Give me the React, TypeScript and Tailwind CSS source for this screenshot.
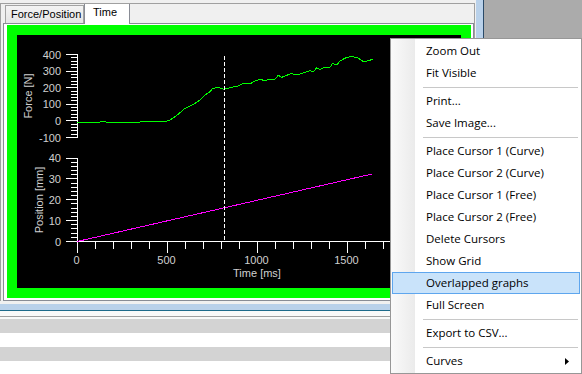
import React from "react";

// force curve, already in page pixels (x, y)
const forcePts: [number, number][] = [
  [77, 122], [100, 122], [103, 121.5], [106, 122], [120, 122], [123, 122.7], [126, 122],
  [140, 122], [145, 121.5], [150, 122], [165, 121.7], [170, 120], [175, 116.7], [180, 112.7],
  [185, 108.3], [190, 106], [195, 103.3], [200, 100], [205, 95], [210, 91.7], [212.7, 88.3],
  [218.3, 87.7], [221.7, 88.3], [224, 89.3], [230, 87.7], [238.3, 86], [243.3, 83.3], [250, 84],
  [253.3, 81.7], [260, 79.3], [265, 80.7], [268.3, 79.3], [275, 79.3], [278.3, 75.3], [281.7, 77.3],
  [286.7, 75.3], [291.7, 73.3], [295, 74.7], [300, 74], [305, 72.3], [310, 70.7], [313.3, 71.7],
  [316.7, 67.7], [320, 69.3], [325, 67.3], [330, 67.3], [332.7, 63.3], [336.7, 65], [340, 61],
  [346.7, 57.3], [351.7, 56.7], [356.7, 57.3], [360, 59.3], [363.3, 61.7], [368.3, 60.7], [372.7, 59.3],
];

const menuItems: (string | null)[] = [
  "Zoom Out",
  "Fit Visible",
  null,
  "Print...",
  "Save Image...",
  null,
  "Place Cursor 1 (Curve)",
  "Place Cursor 2 (Curve)",
  "Place Cursor 1 (Free)",
  "Place Cursor 2 (Free)",
  "Delete Cursors",
  "Show Grid",
  "Overlapped graphs",
  "Full Screen",
  null,
  "Export to CSV...",
  null,
  "Curves",
];

const FONT = "Liberation Sans, Arial, sans-serif";

const yF = (v: number) => 137.5 - (v + 100) * 0.166;
const yP = (v: number) => 241.5 - v * 2.0875;
const xT = (t: number) => 77.5 + t * 0.18;
const snap = (n: number) => Math.floor(n) + 0.5;

// axis labels: [text, x, y, anchor]
const labels: [string, number, number, "start" | "middle" | "end"][] = [
  ...[400, 300, 200, 100, 0, -100].map(
    (v) => [String(v), 61, yF(v) + 4, "end"] as [string, number, number, "end"]
  ),
  ...[40, 30, 20, 10, 0].map(
    (v) => [String(v), 61, yP(v) + 4, "end"] as [string, number, number, "end"]
  ),
  ...[0, 500, 1000, 1500].map(
    (t) => [String(t), xT(t) - 1, 264, "middle"] as [string, number, number, "middle"]
  ),
  ["Time [ms]", 257, 277, "middle"],
];

function Chart() {
  const forceTicks: number[] = [];
  for (let v = -100; v <= 400; v += 20) forceTicks.push(v);
  const posTicks: number[] = [];
  for (let v = 0; v <= 40; v += 2) posTicks.push(v);
  const timeTicks: number[] = [];
  for (let t = 0; t <= 2000; t += 100) timeTicks.push(t);

  return (
    <svg width="444" height="253" viewBox="17 35 444 253" className="block">
      <g stroke="#ffffff" strokeWidth="1" shapeRendering="crispEdges">
        {/* force axis */}
        <line x1="77.5" y1="54" x2="77.5" y2="138" />
        {forceTicks.map((v) => (
          <line key={`f${v}`} x1={v % 100 === 0 ? 66 : 71} y1={snap(yF(v))} x2="77" y2={snap(yF(v))} />
        ))}
        {/* position axis */}
        <line x1="77.5" y1="158" x2="77.5" y2="242" />
        {posTicks.map((v) => (
          <line key={`p${v}`} x1={v % 10 === 0 ? 66 : 71} y1={snap(yP(v))} x2="77" y2={snap(yP(v))} />
        ))}
        {/* time axis */}
        <line x1="77" y1="241.5" x2="446" y2="241.5" />
        {timeTicks.map((t) => (
          <line key={`t${t}`} x1={snap(xT(t))} y1="242" x2={snap(xT(t))} y2={t % 500 === 0 ? 253 : 249} />
        ))}
      </g>

      <g fill="#d0d0d0" fontFamily={FONT} fontSize="11">
        {labels.map(([s, x, y, a], i) => (
          <text key={i} x={x} y={y} textAnchor={a}>
            {s}
          </text>
        ))}
        <text transform="translate(32 96) rotate(-90)" textAnchor="middle">
          Force [N]
        </text>
        <text transform="translate(43 200) rotate(-90)" textAnchor="middle">
          Position [mm]
        </text>
      </g>

      <polyline
        points={forcePts.map((p) => p.join(",")).join(" ")}
        fill="none"
        stroke="#00ff00"
        strokeWidth="1"
        shapeRendering="crispEdges"
      />
      <line x1="77" y1="241.5" x2="372" y2="174" stroke="#ff00ff" strokeWidth="1" shapeRendering="crispEdges" />

      {/* cursor */}
      <line
        x1="224.5"
        y1="56"
        x2="224.5"
        y2="241"
        stroke="#ffffff"
        strokeWidth="1"
        strokeDasharray="4 2"
        shapeRendering="crispEdges"
      />
    </svg>
  );
}

function ContextMenu() {
  return (
    <div className="absolute left-[390px] top-[38px] w-[192px] h-[336px] border border-[#979797] bg-[linear-gradient(90deg,#fafafa_0px,#ebebeb_24px,#ffffff_24px)] py-[1px] font-['Open_Sans',sans-serif] text-[11.5px] text-black">
      {menuItems.map((item, i) =>
        item === null ? (
          <div key={i} className="h-[6px] flex items-center pl-[32px] pr-[3px]">
            <div className="h-px w-full bg-[#c8c8c8]" />
          </div>
        ) : (
          <div
            key={i}
            className={`h-[22px] mx-[1px] flex items-center justify-between pl-[33px] pr-[10px] border ${
              item === "Overlapped graphs" ? "bg-[#c9e3fa] border-[#5ea6ee]" : "border-transparent"
            }`}
          >
            <span>{item}</span>
            {item === "Curves" && (
              <svg width="4" height="7" viewBox="0 0 4 7">
                <path d="M0 0 L4 3.5 L0 7 Z" fill="#000" />
              </svg>
            )}
          </div>
        )
      )}
    </div>
  );
}

export default function App() {
  return (
    <div className="relative w-[582px] h-[374px] overflow-hidden bg-[#ababab] flex font-['Liberation_Sans',Arial,sans-serif]">
      <div className="w-[476px] h-full flex flex-col bg-[#f0f0f0]">
        {/* tab control */}
        <div className="mt-[3px] w-[475px] h-[298px] border-t border-l border-r border-[#a0a0a0] pl-[2px] flex flex-col">
          <div className="h-[19px] flex items-start">
            <div className="ml-[2px] mt-[1px] w-[79px] h-[18px] border-t border-l border-r border-[#a3a3a3] bg-[linear-gradient(#f4f4f4,#e4e4e4)] pl-[5px] pt-[2px] text-[11px] leading-[13px] text-black">
              Force/Position
            </div>
            <div className="relative z-10 w-[46px] h-[20px] border-l border-r border-[#898c95] bg-white pl-[8px] pt-[2px] text-[11px] leading-[13px] text-black">
              Time
            </div>
          </div>
          <div className="w-[471px] h-[278px] border border-[#898c95] bg-white pl-[3px] pr-[2px] pt-[1px] pb-[2px]">
            <div className="w-[464px] h-[273px] bg-[#00ff00] p-[10px]">
              <div className="w-[444px] h-[253px] bg-black">
                <Chart />
              </div>
            </div>
          </div>
        </div>

        {/* lower panes */}
        <div className="h-[3px]" />
        <div className="h-[6px] bg-[#b9d1ea]" />
        <div className="h-px bg-[#1d6a8a]" />
        <div className="h-[5px] bg-[#f9f9f9]" />
        <div className="h-px bg-[#a0a0a0]" />
        <div className="h-[2px] bg-[#f9f9f9]" />
        <div className="h-[14px] bg-[#d3d3d3]" />
        <div className="h-[14px] bg-white" />
        <div className="h-[14px] bg-[#d3d3d3]" />
        <div className="flex-1 bg-white" />
      </div>
      <div className="w-[7px] h-full bg-[#b9d1ea]" />
      <div className="w-px h-full bg-[#2a4a68]" />
      <div className="flex-1" />

      <ContextMenu />
    </div>
  );
}
